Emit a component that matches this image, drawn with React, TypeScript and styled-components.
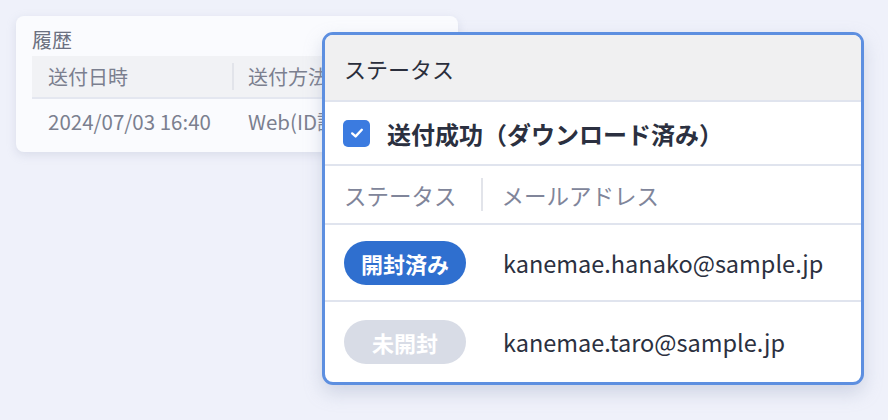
import React from "react"
import styled, { createGlobalStyle } from "styled-components"

const GlobalStyle = createGlobalStyle`
  html, body {
    margin: 0;
    padding: 0;
    background: #eff1fa;
    font-family: "Noto Sans CJK JP", "Noto Sans", sans-serif;
  }
`

interface iRecipient {
  status: "opened" | "unopened"
  email: string
}

const recipients: Array<iRecipient> = [
  { status: "opened", email: "kanemae.hanako@sample.jp" },
  { status: "unopened", email: "kanemae.taro@sample.jp" },
]

const App = () => {
  return (
    <Page>
      <GlobalStyle />
      <HistoryCard>
        <CardTitle>履歴</CardTitle>
        <HistoryTable>
          <HeadRow>
            <HeadCell w="200px">送付日時</HeadCell>
            <HeadCell w="auto" divided>送付方法</HeadCell>
          </HeadRow>
          <DataRow>
            <DataCell w="200px">2024/07/03 16:40</DataCell>
            <DataCell w="auto">Web(ID認証)</DataCell>
          </DataRow>
        </HistoryTable>
      </HistoryCard>

      <Popup>
        <PopupHead>ステータス</PopupHead>
        <CheckRow>
          <CheckBox>
            <svg width="16" height="16" viewBox="0 0 16 16">
              <path d="M3.2 8.4 L6.6 11.4 L12.8 4.8" fill="none" stroke="#fff" strokeWidth="2.4" strokeLinecap="round" strokeLinejoin="round" />
            </svg>
          </CheckBox>
          <CheckLabel>送付成功（ダウンロード済み）</CheckLabel>
        </CheckRow>
        <ColRow>
          <ColLabel>ステータス</ColLabel>
          <ColDivider />
          <ColLabel>メールアドレス</ColLabel>
        </ColRow>
        {recipients.map((r, i) => (
          <MailRow key={r.email} h={i === 0 ? "75px" : "80px"} last={i === recipients.length - 1}>
            <Pill opened={r.status === "opened"}>{r.status === "opened" ? "開封済み" : "未開封"}</Pill>
            <Email>{r.email}</Email>
          </MailRow>
        ))}
      </Popup>
    </Page>
  )
}

export default App

const Page = styled.div`
position:relative;
width:888px;
height:420px;
padding:16px;
box-sizing:border-box;
overflow:hidden;
`
const HistoryCard = styled.div`
width:442px;
height:136px;
box-sizing:border-box;
padding:12px 0 0 16px;
background:#fafbfe;
border-radius:8px;
box-shadow:0 3px 10px rgba(160,168,195,0.28);
overflow:hidden;
`
const CardTitle = styled.div`
font-size:20px;
line-height:24px;
color:#6b7080;
height:28px;
`
const HistoryTable = styled.div`
display:flex;
flex-direction:column;
`
const HeadRow = styled.div`
display:flex;
align-items:center;
height:41px;
background:#f1f2f5;
border-bottom:2px solid #e4e7f0;
`
const HeadCell = styled.div<{ w: string; divided?: boolean }>`
width:${({ w }) => w};
box-sizing:border-box;
padding-left:${({ divided }) => (divided ? "14px" : "16px")};
font-size:20px;
color:#7b7f8f;
height:27px;
line-height:27px;
border-left:${({ divided }) => (divided ? "2px solid #e2e4ea" : "none")};
white-space:nowrap;
`
const DataRow = styled.div`
display:flex;
align-items:center;
height:44px;
`
const DataCell = styled.div<{ w: string }>`
width:${({ w }) => w};
box-sizing:border-box;
padding-left:16px;
font-size:20.5px;
color:#7b7f8f;
white-space:nowrap;
`
const Popup = styled.div`
position:absolute;
left:322px;
top:32px;
width:542px;
height:353px;
box-sizing:border-box;
border:3px solid #5d8fe0;
border-radius:11px;
background:#fff;
overflow:hidden;
box-shadow:0 8px 18px rgba(150,160,190,0.35);
display:flex;
flex-direction:column;
`
const PopupHead = styled.div`
height:65px;
flex-shrink:0;
display:flex;
align-items:center;
padding-left:19px;
background:#f0f0f1;
border-bottom:2px solid #e0e4ee;
font-size:22px;
color:#2a2e3c;
`
const CheckRow = styled.div`
height:62px;
flex-shrink:0;
display:flex;
align-items:center;
gap:17px;
padding-left:18px;
border-bottom:2px solid #e0e4ee;
`
const CheckBox = styled.div`
width:27px;
height:27px;
border-radius:5px;
background:#3b7be0;
display:flex;
align-items:center;
justify-content:center;
`
const CheckLabel = styled.div`
font-size:24px;
font-weight:bold;
color:#2b3040;
`
const ColRow = styled.div`
height:57px;
flex-shrink:0;
display:flex;
align-items:center;
padding-left:19px;
border-bottom:2px solid #e0e4ee;
`
const ColLabel = styled.div`
font-size:22.5px;
color:#80859a;
`
const ColDivider = styled.div`
width:2px;
height:33px;
background:#e2e4ea;
margin:0 19px 0 24px;
`
const MailRow = styled.div<{ h: string; last?: boolean }>`
height:${({ h }) => h};
flex-shrink:0;
display:flex;
align-items:center;
padding-left:19px;
border-bottom:${({ last }) => (last ? "none" : "2px solid #e0e4ee")};
`
const Pill = styled.div<{ opened: boolean }>`
width:122px;
height:44px;
border-radius:22px;
background:${({ opened }) => (opened ? "#2f6fcf" : "#d8dce6")};
color:#fff;
font-size:22px;
font-weight:bold;
display:flex;
align-items:center;
justify-content:center;
margin-right:37px;
`
const Email = styled.div`
font-size:23.5px;
color:#2b3040;
`
